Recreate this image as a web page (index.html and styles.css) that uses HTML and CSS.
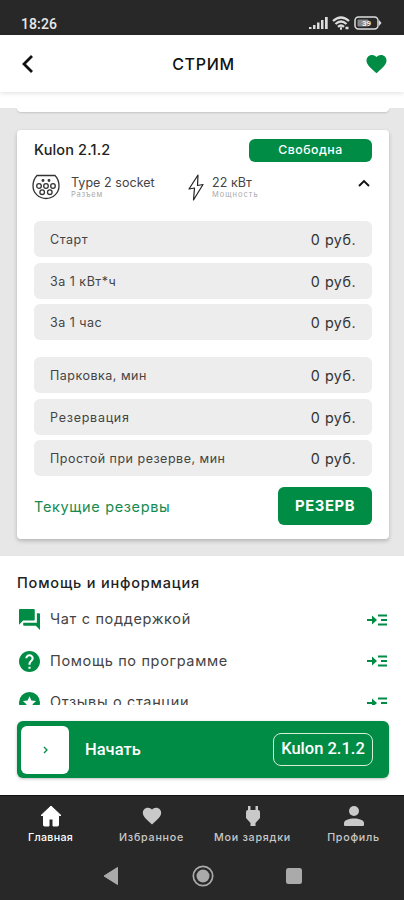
FILE: index.html
```html
<!DOCTYPE html>
<html lang="ru">
<head>
<meta charset="utf-8">
<meta name="viewport" content="width=device-width, initial-scale=1">
<title>Стрим</title>
<link rel="stylesheet" href="styles.css">
</head>
<body>
<svg class="defs" width="0" height="0" aria-hidden="true">
  <symbol id="heart" viewBox="0 0 24 24"><path d="M12 21.35l-1.45-1.32C5.4 15.36 2 12.28 2 8.5 2 5.42 4.42 3 7.5 3c1.74 0 3.41.81 4.5 2.09C13.09 3.81 14.76 3 16.5 3 19.58 3 22 5.42 22 8.5c0 3.78-3.4 6.86-8.55 11.54z"/></symbol>
  <symbol id="go" viewBox="0 0 20 14"><path d="M0 6h5V2.500L10 7l-5 4.500V8H0zM11 1.500h9v2h-9zM14 6h6v2h-6zM11 10.500h9v2h-9z"/></symbol>
</svg>
<div class="phone">
  <div class="status">
    <span class="clock">18:26</span>
    <div class="status-icons">
      <svg width="19" height="12" viewBox="0 0 19 12" fill="#ddd"><path d="M0 10h2.500v2H0zM4 8h2.500v4H4zM8 5.500h2.500V12H8zM12 3h2.500v9H12zM16 0h2.700v12H16z"/></svg>
      <svg width="18" height="14" viewBox="0 0 18 14" fill="none" stroke="#ddd" stroke-width="2.300"><path d="M1 5q8-7 16 0M3.500 8q5.500-5 11 0M6 10.800q3-2.700 6 0"/><path d="M8 12.500h2M13.500 12h3"/></svg>
      <svg width="28" height="14" viewBox="0 0 28 14"><rect x="1" y="1" width="23" height="12" rx="3.500" fill="none" stroke="#ddd" stroke-width="1.500"/><rect x="3.500" y="3.500" width="11" height="7" rx="1" fill="#888"/><path d="M25 4l2.500 3L25 10z" fill="#ddd"/><text class="battery" x="8" y="10">39</text></svg>
    </div>
  </div>
  <header class="header">
    <svg width="14" height="20" viewBox="0 0 14 20" fill="none" stroke="#111" stroke-width="2.800"><path d="M11 2L3 10l8 8"/></svg>
    <h1 class="title">СТРИМ</h1>
    <svg class="fav" width="25" height="24"><use href="#heart"/></svg>
  </header>
  <main class="scroll">
    <div class="previous"></div>
    <section class="station">
      <div class="station-head"><h2 class="name">Kulon 2.1.2</h2><span class="badge">Свободна</span></div>
      <div class="specs">
        <svg width="28" height="27" viewBox="0 0 28 27" fill="none" stroke="#333" stroke-width="1.300"><path d="M5 1.500h18q4 4 4 10.500c0 7-6 12.500-13 12.500S1 19 1 12q0-6.500 4-10.500z"/><circle cx="7" cy="12" r="2.300"/><circle cx="14" cy="12" r="2.300"/><circle cx="21" cy="12" r="2.300"/><circle cx="10.200" cy="18.200" r="2.300"/><circle cx="17.800" cy="18.200" r="2.300"/><circle cx="11" cy="6.500" r=".8"/><circle cx="17" cy="6.500" r=".8"/></svg>
        <div class="spec socket"><span class="value">Type 2 socket</span><span class="caption">Разъем</span></div>
        <svg class="bolt" width="16" height="27" viewBox="0 0 16 27" fill="none" stroke="#222" stroke-width="1.200" stroke-linejoin="round"><path d="M10 1L1 15l5.500-1L5.500 26 15 10.500l-5.500 1z"/></svg>
        <div class="spec power"><span class="value">22 кВт</span><span class="caption wide">Мощность</span></div>
        <svg class="collapse" width="12" height="8" viewBox="0 0 12 8" fill="none" stroke="#111" stroke-width="1.900"><path d="M1 7l5-5 5 5"/></svg>
      </div>
      <div class="tariffs">
        <div class="row"><span class="label">Старт</span><span class="price">0 руб.</span></div>
        <div class="row"><span class="label">За 1 кВт*ч</span><span class="price">0 руб.</span></div>
        <div class="row"><span class="label">За 1 час</span><span class="price">0 руб.</span></div>
      </div>
      <div class="tariffs second">
        <div class="row"><span class="label">Парковка, мин</span><span class="price">0 руб.</span></div>
        <div class="row"><span class="label spaced">Резервация</span><span class="price">0 руб.</span></div>
        <div class="row"><span class="label">Простой при резерве, мин</span><span class="price">0 руб.</span></div>
      </div>
      <div class="actions"><a class="reserves">Текущие резервы</a><button class="reserve">РЕЗЕРВ</button></div>
    </section>
    <section class="help">
      <h2 class="help-title">Помощь и информация</h2>
      <div class="help-row">
        <svg width="21" height="21" viewBox="2 2 20 20"><path d="M21 6h-2v9H6v2c0 .55.45 1 1 1h11l4 4V7c0-.55-.45-1-1-1zm-4 6V3c0-.55-.45-1-1-1H3c-.55 0-1 .45-1 1v14l4-4h10c.55 0 1-.45 1-1z"/></svg>
        <span class="help-text">Чат с поддержкой</span><svg width="20" height="14"><use href="#go"/></svg>
      </div>
      <div class="help-row">
        <svg width="21" height="21" viewBox="2 2 20 20"><path d="M12 2C6.480 2 2 6.480 2 12s4.480 10 10 10 10-4.480 10-10S17.520 2 12 2zm1 17h-2v-2h2v2zm2.070-7.750l-.9.920C13.450 12.900 13 13.500 13 15h-2v-.5c0-1.100.45-2.100 1.170-2.830l1.240-1.260c.37-.36.590-.86.590-1.410 0-1.100-.9-2-2-2s-2 .9-2 2H8c0-2.210 1.790-4 4-4s4 1.790 4 4c0 .88-.36 1.680-.93 2.250z"/></svg>
        <span class="help-text">Помощь по программе</span><svg width="20" height="14"><use href="#go"/></svg>
      </div>
      <div class="help-row">
        <svg width="21" height="21" viewBox="2 2 20 20"><path fill-rule="evenodd" d="M12 2a10 10 0 1 0 0 20 10 10 0 0 0 0-20zm0 4l1.800 4.200 4.500.4-3.400 3 1 4.400-3.900-2.300L8.100 18l1-4.400-3.400-3 4.500-.4z"/></svg>
        <span class="help-text">Отзывы о станции</span><svg width="20" height="14"><use href="#go"/></svg>
      </div>
    </section>
  </main>
  <div class="start-wrap">
    <div class="start">
      <div class="thumb"><svg width="5" height="8" viewBox="0 0 5 8" fill="none" stroke="#008c45" stroke-width="1.300"><path d="M1 1l3 3-3 3"/></svg></div>
      <span class="start-text">Начать</span><span class="connector">Kulon 2.1.2</span>
    </div>
  </div>
  <nav class="nav">
    <div class="tab active"><svg width="22" height="22" viewBox="0 0 22 22"><path d="M11 1l10 9.500h-2.500V20a1 1 0 0 1-1 1H13v-7H9v7H4.500a1 1 0 0 1-1-1v-9.500H1z" stroke="currentColor" stroke-linejoin="round"/></svg><span class="tab-text">Главная</span></div>
    <div class="tab"><svg width="24" height="22"><use href="#heart"/></svg><span class="tab-text">Избранное</span></div>
    <div class="tab"><svg width="16" height="22" viewBox="0 0 16 22"><path d="M3 1h2.500v4h5V1H13v4q2 0 2 2v6l-4.500 5v3h-5v-3L1 13V7q0-2 2-2z"/></svg><span class="tab-text">Мои зарядки</span></div>
    <div class="tab"><svg width="20" height="22" viewBox="0 0 20 22"><circle cx="10" cy="6" r="5"/><path d="M0 20v-2c0-6 20-6 20 0v2q0 1-1 1H1q-1 0-1-1z"/></svg><span class="tab-text">Профиль</span></div>
  </nav>
  <div class="system">
    <svg width="16" height="20" viewBox="0 0 16 20"><path d="M1 10L14.500 1.500v17z" stroke="#aaa" stroke-linejoin="round"/></svg>
    <svg width="22" height="22" viewBox="0 0 22 22"><circle cx="11" cy="11" r="9.700" fill="none" stroke="#aaa" stroke-width="1.700"/><circle cx="11" cy="11" r="6.500"/></svg>
    <svg width="16" height="16"><rect width="16" height="16" rx="2.500"/></svg>
  </div>
</div>
</body>
</html>
```
FILE: styles.css
```css
* { box-sizing: border-box; }
body { margin: 0; background: #fff; font-family: Inter, "Noto Sans", sans-serif; color: #222; }
h1, h2 { margin: 0; }
svg { display: block; flex: none; }
span, a, h1, h2 { white-space: nowrap; }
.defs { position: absolute; }
.phone { width: 404px; height: 900px; display: flex; flex-direction: column; overflow: hidden; }

.status { height: 35px; flex: none; background: #282828; display: flex; justify-content: space-between; padding: 16px 21px 0 21px; }
.clock { font: 500 14px/16px Roboto, sans-serif; color: #e8e8e8; letter-spacing: .1px; }
.status-icons { display: flex; gap: 4px; align-items: center; height: 14px; margin-right: 1px; }
.battery { font: 700 8px Roboto, sans-serif; fill: #eee; }

.header { height: 57px; flex: none; display: flex; align-items: center; justify-content: space-between; padding: 0 15px 0 21px; box-shadow: 0 1px 5px rgba(0,0,0,.13); z-index: 1; background: #fff; }
.title { font-size: 16px; font-weight: 500; letter-spacing: .7px; color: #111; margin-left: 8px; }
.fav { fill: #008c45; }

.scroll { height: 613px; flex: none; overflow: hidden; padding-top: 16px; background: linear-gradient(#fff 16px, #e7e7e7 16px); }
.previous { height: 4px; margin: 0 15px 0 17px; background: #fff; border-radius: 0 0 4px 4px; box-shadow: 0 1px 2px rgba(0,0,0,.15); }
.station { height: 409px; margin: 18px 15px 0 17px; padding: 9px 17px 0; background: #fff; border-radius: 4px; box-shadow: 0 2px 4px rgba(0,0,0,.22); }
.station-head { display: flex; height: 23px; justify-content: space-between; }
.name { font-size: 14.500px; line-height: 21px; font-weight: 500; letter-spacing: .15px; }
.badge { width: 123px; height: 23px; border-radius: 6px; background: #008c45; color: #fff; font-size: 12.300px; line-height: 22px; font-weight: 500; text-align: center; letter-spacing: .5px; }
.specs { display: flex; align-items: flex-start; height: 48px; padding: 12px 2px 0 0; margin-left: -2px; }
.spec { display: flex; flex-direction: column; }
.socket { width: 118px; margin-left: 11px; }
.power { margin-left: 8px; }
.bolt { margin-left: -1px; }
.value { font-size: 12.500px; line-height: 15px; color: #444; letter-spacing: .05px; padding-top: 1px; }
.caption { font-size: 7.500px; line-height: 9px; color: #aaa; letter-spacing: .7px; }
.wide { letter-spacing: 1px; }
.collapse { margin: 5px 0 0 auto; }
.tariffs { display: flex; flex-direction: column; gap: 5.500px; margin-top: 11px; }
.second { margin-top: 17px; }
.row { height: 36px; border-radius: 6px; background: #ededed; display: flex; align-items: center; justify-content: space-between; padding: 1px 16px 0; }
.label { font-size: 12.500px; color: #444; letter-spacing: .5px; }
.spaced { letter-spacing: .75px; }
.price { font-size: 14.300px; color: #333; letter-spacing: .5px; }
.actions { display: flex; justify-content: space-between; margin-top: 11px; }
.reserves { color: #168b50; font-size: 14.500px; line-height: 39px; letter-spacing: .65px; }
.reserve { width: 94px; height: 38px; border: 0; border-radius: 6px; background: #008c45; color: #fff; font: 700 14.800px Inter, sans-serif; letter-spacing: .6px; }

.help { margin-top: 17px; height: 200px; padding: 15px 17px 0; background: #fff; }
.help-title { font-size: 14.500px; line-height: 24px; font-weight: 500; letter-spacing: .8px; }
.help-row { height: 41.500px; display: flex; align-items: center; padding-left: 2px; fill: #008c45; }
.help-title + .help-row { margin-top: 4px; }
.help-text { flex: 1; margin-left: 10px; font-size: 14.500px; line-height: 18px; padding-bottom: 1px; color: #444; letter-spacing: .65px; }

.start-wrap { height: 90px; flex: none; padding: 16px 15px 0 17px; background: #fff; }
.start { height: 57px; padding: 0 16px 0 4px; border-radius: 6px; background: #008c45; display: flex; align-items: center; box-shadow: 0 1px 3px rgba(0,0,0,.25); color: #fff; font-family: Roboto, sans-serif; font-size: 16.500px; font-weight: 500; }
.thumb { width: 48px; height: 48px; border-radius: 6px; background: #fff; display: flex; align-items: center; justify-content: center; }
.start-text { margin-left: 16px; flex: 1; }
.connector { width: 100px; height: 33px; border: 1.500px solid #d5efd9; border-radius: 8px; line-height: 30px; text-align: center; }

.nav { height: 56px; flex: none; background: #282828; display: grid; grid-template-columns: repeat(4, 1fr); padding-top: 9px; border-top: 1px solid #111; }
.tab { display: flex; flex-direction: column; align-items: center; gap: 4px; color: #c9c9c9; fill: currentColor; }
.tab-text { font-size: 10.700px; line-height: 14px; letter-spacing: .75px; font-weight: 500; }
.active { color: #fff; }
.active .tab-text { letter-spacing: .3px; }
.system { height: 49px; flex: none; background: #282828; display: flex; align-items: center; justify-content: space-between; padding: 0 102px 0 103px; fill: #aaa; }
```
